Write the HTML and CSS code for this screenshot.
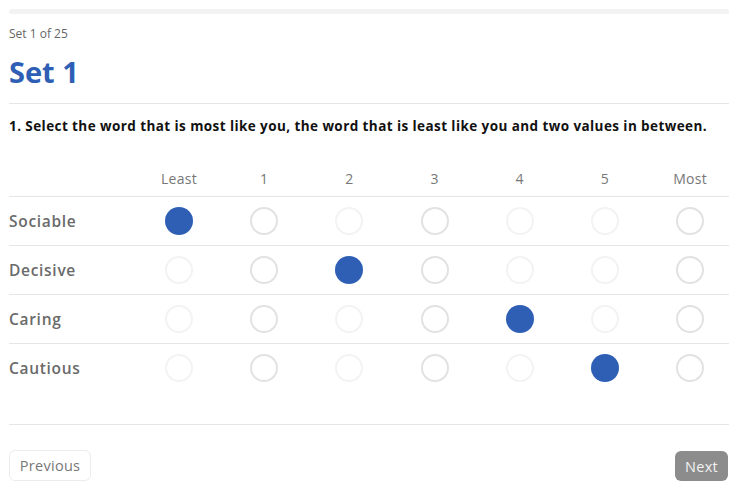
FILE: index.html
```html
<!DOCTYPE html>
<html>
<head>
<meta charset="utf-8">
<link rel="stylesheet" href="styles.css">
</head>
<body>
<div class="page">
  <div class="progress"><div class="progress-fill"></div></div>
  <div class="meta">Set 1 of 25</div>
  <h1 class="title">Set 1</h1>
  <hr class="divider">
  <p class="question">1. Select the word that is most like you, the word that is least like you and two values in between.</p>
  <div class="matrix">
    <div class="row head">
      <div></div>
      <div class="col">Least</div><div class="col">1</div><div class="col">2</div><div class="col">3</div><div class="col">4</div><div class="col">5</div><div class="col">Most</div>
    </div>
    <div class="row">
      <div class="label">Sociable</div>
      <div class="cell"><span class="dot on"></span></div>
      <div class="cell"><span class="dot"></span></div>
      <div class="cell"><span class="dot dim"></span></div>
      <div class="cell"><span class="dot"></span></div>
      <div class="cell"><span class="dot dim"></span></div>
      <div class="cell"><span class="dot dim"></span></div>
      <div class="cell"><span class="dot"></span></div>
    </div>
    <div class="row">
      <div class="label">Decisive</div>
      <div class="cell"><span class="dot dim"></span></div>
      <div class="cell"><span class="dot"></span></div>
      <div class="cell"><span class="dot on"></span></div>
      <div class="cell"><span class="dot"></span></div>
      <div class="cell"><span class="dot dim"></span></div>
      <div class="cell"><span class="dot dim"></span></div>
      <div class="cell"><span class="dot"></span></div>
    </div>
    <div class="row">
      <div class="label">Caring</div>
      <div class="cell"><span class="dot dim"></span></div>
      <div class="cell"><span class="dot"></span></div>
      <div class="cell"><span class="dot dim"></span></div>
      <div class="cell"><span class="dot"></span></div>
      <div class="cell"><span class="dot on"></span></div>
      <div class="cell"><span class="dot dim"></span></div>
      <div class="cell"><span class="dot"></span></div>
    </div>
    <div class="row last">
      <div class="label">Cautious</div>
      <div class="cell"><span class="dot dim"></span></div>
      <div class="cell"><span class="dot"></span></div>
      <div class="cell"><span class="dot dim"></span></div>
      <div class="cell"><span class="dot"></span></div>
      <div class="cell"><span class="dot dim"></span></div>
      <div class="cell"><span class="dot on"></span></div>
      <div class="cell"><span class="dot"></span></div>
    </div>
  </div>
  <div class="footer">
    <button class="btn prev">Previous</button>
    <button class="btn next">Next</button>
  </div>
</div>
</body>
</html>
```
FILE: styles.css
```css
* { box-sizing: border-box; }
html, body { margin: 0; padding: 0; background: #fff; }
body { font-family: "Open Sans", "Noto Sans", sans-serif; color: #222; }
.page { width: 740px; padding: 9px 11px 0 9px; }
.progress { height: 5px; background: #f3f3f3; border-radius: 3px; }
.meta { margin-top: 12px; font-size: 12px; line-height: 16px; color: #666; }
.title { margin: 12px 0 0; font-size: 29px; line-height: 36px; font-weight: 700; color: #2e5fb5; }
.divider { margin: 13px 0 0; border: 0; border-top: 1px solid #e6e6e6; height: 0; }
.question { margin: 13px 0 0; font-size: 13.5px; line-height: 18px; font-weight: 700; color: #111; letter-spacing: 0.42px; white-space: nowrap; }
.matrix { margin-top: 26px; }
.row { display: grid; grid-template-columns: 127.4px repeat(7, 85.2px); align-items: center; height: 49px; border-bottom: 1px solid #e6e6e6; width: 720px; }
.row.head { height: 36px; }
.row.last { border-bottom: 0; height: 48px; }
.col { text-align: center; font-size: 14px; font-weight: 400; color: #777; letter-spacing: 0.3px; }
.label { font-size: 15.5px; font-weight: 600; color: #6a6a6a; letter-spacing: 0.7px; }
.cell { display: flex; justify-content: center; }
.dot { width: 28px; height: 28px; border-radius: 50%; border: 2px solid #e2e2e2; display: block; }
.dot.dim { border-color: #f3f3f3; }
.dot.on { border: 0; background: #2e5fb5; }
.footer { margin-top: 32px; border-top: 1px solid #e6e6e6; padding-top: 25px; display: flex; justify-content: space-between; align-items: center; }
.btn { font-family: inherit; font-size: 14.5px; border-radius: 6px; cursor: pointer; letter-spacing: 0.3px; }
.prev { width: 82px; height: 31px; background: #fff; border: 1px solid #ececec; color: #777; }
.next { width: 53px; height: 30px; background: #8c8c8c; border: 0; color: #f2f2f2; margin-top: 1px; margin-right: 1px; }
```
